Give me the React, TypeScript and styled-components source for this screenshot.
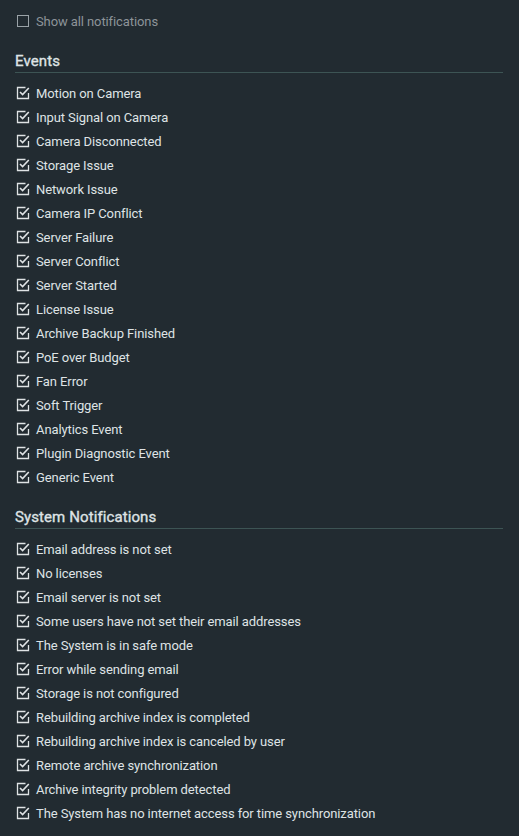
import React from 'react'
import styled, {createGlobalStyle} from 'styled-components'

const events = [
  'Motion on Camera',
  'Input Signal on Camera',
  'Camera Disconnected',
  'Storage Issue',
  'Network Issue',
  'Camera IP Conflict',
  'Server Failure',
  'Server Conflict',
  'Server Started',
  'License Issue',
  'Archive Backup Finished',
  'PoE over Budget',
  'Fan Error',
  'Soft Trigger',
  'Analytics Event',
  'Plugin Diagnostic Event',
  'Generic Event',
]

const systemNotifications = [
  'Email address is not set',
  'No licenses',
  'Email server is not set',
  'Some users have not set their email addresses',
  'The System is in safe mode',
  'Error while sending email',
  'Storage is not configured',
  'Rebuilding archive index is completed',
  'Rebuilding archive index is canceled by user',
  'Remote archive synchronization',
  'Archive integrity problem detected',
  'The System has no internet access for time synchronization',
]

const GlobalStyle = createGlobalStyle`
  html, body {
    margin: 0;
    padding: 0;
    background: #222b31;
  }
  body {
    font-family: Roboto, "Liberation Sans", sans-serif;
    font-size: 13px;
    color: #dfe3e5;
  }
`

function CheckIcon({checked}: {checked: boolean}) {
  if (!checked) {
    return (
      <svg width="14" height="14" viewBox="0 0 14 14">
        <rect x="1.5" y="1.5" width="11" height="11" fill="none" stroke="#9aa2a7" strokeWidth="1" />
      </svg>
    )
  }
  return (
    <svg width="14" height="14" viewBox="0 0 14 14">
      <path d="M9.5 1.5 H1.5 V12.5 H12.5 V7" fill="none" stroke="#dfe3e5" strokeWidth="1.3" />
      <path d="M4 6 L6.6 8.6 L12.8 2" fill="none" stroke="#dfe3e5" strokeWidth="1.6" />
    </svg>
  )
}

export default function App() {
  return (
    <>
      <GlobalStyle />
      <Container>
        <Row $muted>
          <CheckIcon checked={false} />
          <span>Show all notifications</span>
        </Row>
        <Section title="Events" items={events} />
        <Section title="System Notifications" items={systemNotifications} />
      </Container>
    </>
  )
}

function Section({title, items}: {title: string; items: string[]}) {
  return (
    <div>
      <Header>{title}</Header>
      {items.map((item) => (
        <Row key={item}>
          <CheckIcon checked />
          <span>{item}</span>
        </Row>
      ))}
    </div>
  )
}

const Container = styled.div`
  padding: 9px 16px 0 15px;
`

const Row = styled.div<{$muted?: boolean}>`
  height: 24px;
  display: flex;
  align-items: center;
  gap: 6px;
  padding-left: 1px;
  letter-spacing: -0.1px;
  color: ${(p) => (p.$muted ? '#8d9499' : '#dfe3e5')};
  white-space: nowrap;
  svg {
    flex: none;
  }
`

const Header = styled.div`
  margin-top: 18px;
  margin-bottom: 8px;
  line-height: 20px;
  padding-bottom: 1px;
  border-bottom: 1px solid #3d5454;
  font-size: 15px;
  font-weight: 400;
  letter-spacing: 0.1px;
  -webkit-text-stroke: 0.35px #dfe3e5;
  color: #dfe3e5;
`
